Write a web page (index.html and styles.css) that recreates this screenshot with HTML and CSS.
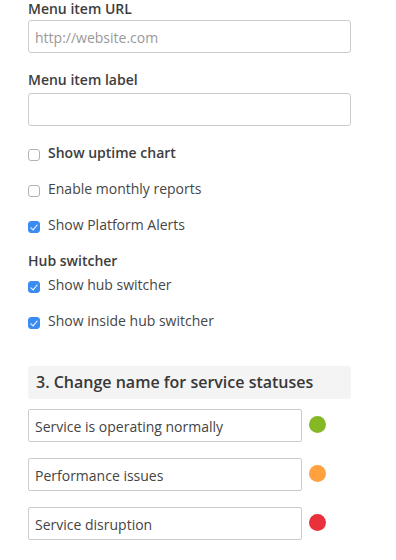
FILE: index.html
```html
<!DOCTYPE html>
<html lang="en">
<head>
    <meta charset="UTF-8">
    <meta name="viewport" content="width=device-width, initial-scale=1.0">
    <title>Status page settings</title>
    <link rel="stylesheet" href="styles.css">
</head>
<body>

<div class="settings">
    <div class="field">
        <label for="menuUrl">Menu item URL</label>
        <input type="text" id="menuUrl" placeholder="http://website.com">
    </div>

    <div class="field">
        <label for="menuLabel">Menu item label</label>
        <input type="text" id="menuLabel">
    </div>

    <div class="checks">
        <label class="check strong"><input type="checkbox"> Show uptime chart</label>
        <label class="check"><input type="checkbox"> Enable monthly reports</label>
        <label class="check"><input type="checkbox" checked> Show Platform Alerts</label>
    </div>

    <div class="group">
        <div class="group-title">Hub switcher</div>
        <label class="check"><input type="checkbox" checked> Show hub switcher</label>
        <label class="check"><input type="checkbox" checked> Show inside hub switcher</label>
    </div>

    <h2 class="section-title">3. Change name for service statuses</h2>

    <div class="statuses">
        <div class="status-row">
            <input type="text" value="Service is operating normally">
            <span class="dot green"></span>
        </div>
        <div class="status-row">
            <input type="text" value="Performance issues">
            <span class="dot orange"></span>
        </div>
        <div class="status-row">
            <input type="text" value="Service disruption">
            <span class="dot red"></span>
        </div>
    </div>
</div>

</body>
</html>
```

FILE: styles.css
```css
body {
    font-family: "Open Sans", Arial, sans-serif;
    font-size: 14px;
    color: #444;
    background-color: #fff;
    margin: 0;
}
.settings {
    width: 323px;
    padding-left: 28px;
}
.field {
    margin-bottom: 17px;
}
.field label {
    display: block;
    font-weight: 600;
    line-height: 17px;
    margin-bottom: 3px;
    color: #3d3d3d;
}
.field + .field label {
    line-height: 20px;
}
input[type="text"] {
    display: block;
    box-sizing: border-box;
    width: 100%;
    height: 33px;
    padding: 2px 6px 0;
    border: 1px solid #ccc;
    border-radius: 3px;
    font-family: inherit;
    font-size: 14px;
    color: #444;
    outline: none;
}
input[type="text"]::placeholder {
    color: #999;
}

/* checkbox rows */
.check {
    display: flex;
    align-items: center;
    line-height: 20px;
    margin-bottom: 16px;
    color: #464646;
}
.check.strong {
    font-weight: 600;
    color: #3d3d3d;
}
.check input {
    appearance: none;
    -webkit-appearance: none;
    position: relative;
    box-sizing: border-box;
    width: 12px;
    height: 12px;
    margin: 3px 8px 0 0;
    border: 1px solid #b3b3b3;
    border-radius: 3px;
    background-color: #fff;
}
.check input:checked {
    border-color: #3a8cf2;
    background-color: #3a8cf2;
}
.check input:checked::after {
    content: "";
    position: absolute;
    left: 3px;
    top: 1px;
    width: 3px;
    height: 6px;
    border: solid #fff;
    border-width: 0 1.5px 1.5px 0;
    transform: rotate(40deg);
}
.group-title {
    font-weight: 600;
    line-height: 20px;
    margin-bottom: 4px;
    color: #3d3d3d;
}
.group .check:last-child {
    margin-bottom: 0;
}

/* service statuses */
.section-title {
    margin: 35px 0 10px;
    padding: 0 8px;
    height: 33px;
    line-height: 32px;
    font-size: 16px;
    font-weight: 600;
    color: #383838;
    background-color: #f4f4f4;
    border-radius: 3px;
}
.status-row {
    display: flex;
    align-items: center;
    margin-bottom: 16px;
}
.status-row input[type="text"] {
    width: 274px;
    border-radius: 2px;
}
.dot {
    width: 17px;
    height: 17px;
    margin: -2px 0 0 7px;
    border-radius: 50%;
}
.dot.green {
    background-color: #86b825;
}
.dot.orange {
    background-color: #ffa13e;
}
.dot.red {
    background-color: #e8313a;
}
```
